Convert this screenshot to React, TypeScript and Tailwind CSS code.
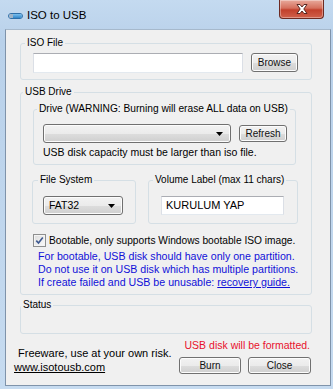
import React from 'react';

const ui = "font-['Liberation_Sans',Arial,sans-serif]";

function Group({
  label,
  className = '',
  legendClass = '',
  children,
}: {
  label: string;
  className?: string;
  legendClass?: string;
  children?: React.ReactNode;
}) {
  return (
    <fieldset className={`rounded-[3px] border border-[#d5dfe5] ${className}`}>
      <legend className={`whitespace-nowrap px-[2px] leading-[12px] text-black ${legendClass}`}>{label}</legend>
      {children}
    </fieldset>
  );
}

function Button({ label, className = '' }: { label: string; className?: string }) {
  return (
    <div
      className={`flex items-center justify-center rounded-[3px] border border-[#707070] bg-[linear-gradient(#f2f2f2_0%,#ebebeb_50%,#dddddd_51%,#cfcfcf_100%)] text-[10px] leading-none text-[#111] shadow-[inset_0_0_0_1px_#fcfcfc] ${className}`}
    >
      {label}
    </div>
  );
}

function Arrow() {
  return (
    <svg width="7" height="4" viewBox="0 0 7 4">
      <path d="M0 0h7L3.5 4z" fill="#000" />
    </svg>
  );
}

function Combo({ text, className = '' }: { text?: string; className?: string }) {
  return (
    <div
      className={`flex items-center justify-between rounded-[3px] border border-[#707070] bg-[linear-gradient(#f2f2f2_0%,#ebebeb_50%,#dddddd_51%,#cfcfcf_100%)] pl-[5px] pr-[7px] text-[10.5px] text-black shadow-[inset_0_0_0_1px_#fcfcfc] ${className}`}
    >
      <span>{text}</span>
      <Arrow />
    </div>
  );
}

function TextBox({ text, className = '' }: { text?: string; className?: string }) {
  return (
    <div
      className={`flex items-center border border-[#abadb3] border-x-[#dbdfe6] border-b-[#e3e9ef] bg-white pl-[4px] text-[11px] text-black ${className}`}
    >
      {text}
    </div>
  );
}

export default function App() {
  return (
    <div className={`${ui} relative h-[389px] w-[333px] overflow-hidden bg-[linear-gradient(#c4daf0,#b9d1ea_40px,#c6dbf0)]`}>
      {/* title bar */}
      <div className="flex h-[29px] items-start">
        <div className="ml-[8px] mt-[13px] flex h-[6px] w-[15px] overflow-hidden rounded-[3px] border border-[#2f6fa8]">
          <div className="w-[4px] bg-[#9fb3c6]" />
          <div className="flex-1 bg-[linear-gradient(#7cc0ee,#3186c9)]" />
        </div>
        <div className="ml-[4px] mt-[8px] text-[11.5px] leading-[14px] text-black">ISO to USB</div>
        <div className="ml-auto mr-[9px] flex h-[19px] w-[45px] items-center justify-center rounded-b-[4px] border border-t-0 border-[#6d2a22] bg-[linear-gradient(#e8aa9c,#d5705d_45%,#c2402c_55%,#d0604b)] shadow-[inset_0_0_0_1px_rgba(255,255,255,0.35)]">
          <svg width="12" height="10" viewBox="0 0 12 10">
            <path
              d="M1 0.5h3l2 2.5 2-2.5h3L7.8 5 11 9.5H8L6 7 4 9.5H1L4.2 5z"
              fill="#fff"
              stroke="#4a1c16"
              strokeWidth="0.9"
              strokeLinejoin="round"
            />
          </svg>
        </div>
      </div>

      {/* client area */}
      <div className="ml-[5px] flex h-[357px] w-[326px] flex-col border border-[#7f93aa] border-t-[#a6b9cc] bg-[#f0f0f0]">
        {/* ISO File */}
        <Group label="ISO File" className="ml-[14px] mt-[7px] w-[292px] pb-[6px]" legendClass="ml-[4px] text-[10px]">
          <div className="flex pl-[12px] pt-[4px]">
            <TextBox className="h-[20px] w-[210px]" />
            <Button label="Browse" className="ml-[8px] h-[19px] w-[47px]" />
          </div>
        </Group>

        {/* USB Drive */}
        <Group label="USB Drive" className="ml-[14px] mt-[6px] w-[292px] pb-[5px]" legendClass="ml-[2px] text-[10px]">
          <Group
            label="Drive (WARNING: Burning will erase ALL data on USB)"
            className="ml-[12px] mt-[5px] w-[263px] pb-[5px]"
            legendClass="ml-[3px] text-[10.2px]"
          >
            <div className="ml-[9px] mt-[9px] flex items-start">
              <Combo className="h-[19px] w-[188px]" />
              <Button label="Refresh" className="ml-[8px] mt-[1px] h-[17px] w-[48px]" />
            </div>
            <div className="ml-[9px] mt-[3px] text-[10.5px] leading-[13px] text-black">
              USB disk capacity must be larger than iso file.
            </div>
          </Group>

          <div className="ml-[11px] mt-[9px] flex gap-[12px]">
            <Group label="File System" className="w-[104px] pb-[8px]" legendClass="ml-[5px] text-[10px]">
              <Combo text="FAT32" className="ml-[10px] mt-[10px] h-[19px] w-[80px]" />
            </Group>
            <Group label="Volume Label (max 11 chars)" className="w-[150px] pb-[8px]" legendClass="ml-[4px] text-[10px]">
              <TextBox text="KURULUM YAP" className="ml-[12px] mt-[10px] h-[19px] w-[123px]" />
            </Group>
          </div>

          <div className="ml-[12px] mt-[10px] flex items-center">
            <div className="flex h-[13px] w-[13px] items-center justify-center border border-[#8e8f8f] bg-[linear-gradient(135deg,#dcdcdc,#fbfbfb)] shadow-[inset_0_0_0_1px_#f4f4f4]">
              <svg width="9" height="9" viewBox="0 0 9 9">
                <path d="M1.3 4.6 3.5 7 7.8 1.4" fill="none" stroke="#3e5990" strokeWidth="1.6" />
              </svg>
            </div>
            <span className="ml-[3px] text-[10.2px] leading-[13px] text-black">
              Bootable, only supports Windows bootable ISO image.
            </span>
          </div>

          <div className="ml-[17px] mt-[3px] text-[10.65px] leading-[13px] text-[#1010d8]">
            <div>For bootable, USB disk should have only one partition.</div>
            <div>Do not use it on USB disk which has multiple partitions.</div>
            <div>
              If create failed and USB be unusable: <span className="underline">recovery guide.</span>
            </div>
          </div>
        </Group>

        {/* Status */}
        <Group label="Status" className="ml-[14px] mt-[4px] w-[292px]" legendClass="ml-0 text-[10px]">
          <div className="h-[22px]" />
        </Group>

        {/* footer */}
        <div className="mt-[5px] flex">
          <div className="flex flex-col text-[11px] leading-[13px] text-black">
            <div className="ml-[12px] mt-[8px]">Freeware, use at your own risk.</div>
            <div className="ml-[8px] mt-[1px] underline">www.isotousb.com</div>
          </div>
          <div className="ml-auto mr-[19px] flex w-[132px] flex-col items-end">
            <div className="pr-[1px] text-[10.5px] leading-[13px] text-[#e8112d]">USB disk will be formatted.</div>
            <div className="mt-[5px] flex gap-[7px]">
              <Button label="Burn" className="h-[17px] w-[62px]" />
              <Button label="Close" className="h-[17px] w-[63px]" />
            </div>
          </div>
        </div>
      </div>
    </div>
  );
}
